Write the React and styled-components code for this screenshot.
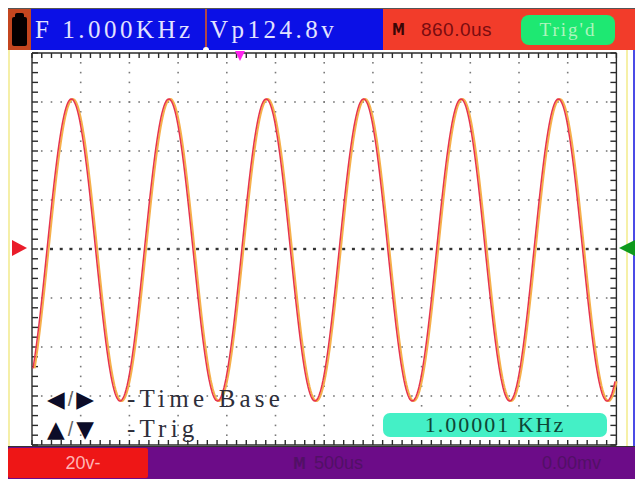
import React from 'react';
import styled, { createGlobalStyle } from 'styled-components';

const GlobalStyle = createGlobalStyle`
  body {
    margin: 0;
    background: #fff;
    font-family: "Liberation Sans", Arial, sans-serif;
  }
`;

const W = 587;
const H = 396;
const X0 = 1;
const Y0 = 3;
const DX = 48.7;
const DY = 49;
const COLS = 12;
const ROWS = 8;

const LCD_FONT = `"Liberation Serif", "DejaVu Serif", serif`;

const Frame = styled.div`
  margin: 8px 0 0 8px;
  width: 627px;
  display: flex;
  flex-direction: column;
`;

const TopBar = styled.div`
  display: flex;
  height: 41px;
  border-top: 1px solid #555;
`;

const BatteryCell = styled.div`
  width: 23px;
  background: #c4461f;
  display: flex;
  align-items: center;
  justify-content: center;
`;

const Battery = styled.div`
  position: relative;
  width: 15px;
  height: 29px;
  margin-top: 4px;
  background: #050000;
  border-radius: 2px;

  &::before {
    content: '';
    position: absolute;
    left: 3px;
    top: -4px;
    width: 9px;
    height: 4px;
    background: #050000;
    border-radius: 2px 2px 0 0;
  }
`;

const Readout = styled.div`
  width: ${p => p.$w}px;
  background: #0b10e6;
  color: #e2e2ff;
  font-family: ${LCD_FONT};
  font-size: 25px;
  letter-spacing: 3.5px;
  display: flex;
  align-items: center;
  padding-left: ${p => p.$pad}px;
  box-sizing: border-box;
  white-space: pre;
`;

const Divider = styled.div`
  position: relative;
  width: 2px;
  background: #b04848;

  &::after {
    content: '';
    position: absolute;
    left: -2px;
    bottom: -3px;
    width: 6px;
    height: 6px;
    border-radius: 50%;
    background: #fff;
  }
`;

const StatusCell = styled.div`
  flex: 1;
  background: #f23c2a;
  display: flex;
  align-items: center;
  padding: 0 20px 0 9px;
`;

const MIcon = styled.span`
  font-family: "DejaVu Sans", sans-serif;
  font-weight: bold;
  font-size: 13px;
  color: ${p => p.$color};
  margin-right: ${p => p.$gap}px;
  transform: scaleY(1.15);
`;

const TimeText = styled.span`
  color: #7a0c10;
  font-size: 19px;
  letter-spacing: 0.5px;
`;

const TrigPill = styled.div`
  margin-left: auto;
  width: 94px;
  height: 30px;
  border-radius: 8px;
  background: #1ee872;
  color: #aef5be;
  font-family: ${LCD_FONT};
  font-size: 19px;
  letter-spacing: 2px;
  display: flex;
  align-items: center;
  justify-content: center;
`;

const Middle = styled.div`
  display: flex;
  height: ${H}px;
`;

const LeftGutter = styled.div`
  width: 21px;
  border-left: 2px solid #f5efa8;
  display: flex;
  align-items: center;
`;

const Marker = styled.div`
  width: 0;
  height: 0;
  border-top: 8px solid transparent;
  border-bottom: 8px solid transparent;
  ${p => p.$dir === 'right'
    ? `border-left: 15px solid ${p.$color}; margin-left: 2px;`
    : `border-right: 16px solid ${p.$color}; margin-left: 1px;`}
`;

const Screen = styled.div`
  position: relative;
  width: ${W}px;
  height: ${H}px;
`;

const RightGutter = styled.div`
  width: 15px;
  border-right: 2px solid #4b4be6;
  display: flex;
  align-items: center;
  background: linear-gradient(to right, transparent 8px, #f6f0a8 8px, #f6f0a8 10px, transparent 10px);
`;

const TrigPointer = styled.div`
  position: absolute;
  left: 204px;
  top: 1px;
  width: 0;
  height: 0;
  border-left: 5px solid transparent;
  border-right: 5px solid transparent;
  border-top: 10px solid #ff22ee;
`;

const Hints = styled.div`
  position: absolute;
  left: 16px;
  top: 336px;
  display: flex;
  flex-direction: column;
  gap: 4px;
`;

const HintRow = styled.div`
  display: flex;
  align-items: center;
  height: 26px;
  font-family: ${LCD_FONT};
  font-size: 25px;
  letter-spacing: 4.2px;
  color: #2e2e3a;
  white-space: pre;
`;

const Keys = styled.span`
  width: 80px;
  display: flex;
  align-items: center;
  font-family: "DejaVu Sans", sans-serif;
  font-size: 23px;
  letter-spacing: 0;
  color: #0c0c28;
`;

const Slash = styled.span`
  font-family: "Liberation Sans", sans-serif;
  font-size: 20px;
  color: #666;
  margin: 0 3px;
`;

const FreqPill = styled.div`
  position: absolute;
  left: 352px;
  top: 363px;
  width: 224px;
  height: 24px;
  border-radius: 7px;
  background: #44f0c6;
  color: #0e4636;
  font-family: ${LCD_FONT};
  font-size: 22px;
  letter-spacing: 2px;
  display: flex;
  align-items: center;
  justify-content: center;
  white-space: pre;
`;

const BottomBar = styled.div`
  display: flex;
  align-items: center;
  height: 32px;
  background: #6c0c88;
  border-top: 1px solid #333;
`;

const ChannelPill = styled.div`
  width: 140px;
  height: 30px;
  background: #ee1616;
  border-radius: 2px;
  color: #ffb4b4;
  font-size: 18px;
  display: flex;
  align-items: center;
  justify-content: center;
  padding-left: 10px;
  box-sizing: border-box;
`;

const DimLabel = styled.span`
  color: #521066;
  font-size: 18px;
  display: flex;
  align-items: center;
  margin-left: ${p => p.$ml || 0};
  margin-right: ${p => p.$mr || 0}px;
`;

const range = n => Array.from({ length: n }, (_, i) => i);

const Graticule = () => {
  const gx = X0 + COLS * DX;
  const gy = Y0 + ROWS * DY;
  const sub = range(COLS * 5 + 1).map(i => X0 + (i * DX) / 5);
  const subY = range(ROWS * 5 + 1).map(i => Y0 + (i * DY) / 5);
  const ticks = [];

  // frame ticks, five per division
  sub.forEach((x, i) => {
    ticks.push(<line key={`tt${i}`} x1={x} y1={Y0} x2={x} y2={Y0 + 5} />);
    ticks.push(<line key={`tb${i}`} x1={x} y1={gy} x2={x} y2={gy - 5} />);
  });
  subY.forEach((y, i) => {
    ticks.push(<line key={`tl${i}`} x1={X0} y1={y} x2={X0 + 6} y2={y} />);
    ticks.push(<line key={`tr${i}`} x1={gx} y1={y} x2={gx - 6} y2={y} />);
  });

  const dots = [];
  range(ROWS - 1).forEach(r => {
    const y = Y0 + (r + 1) * DY;
    const center = r + 1 === ROWS / 2;
    sub.slice(1, -1).forEach((x, i) => {
      dots.push(center
        ? <rect key={`h${r}-${i}`} x={x - 1.5} y={y - 1.2} width={3} height={2.4} fill="#333" />
        : <rect key={`h${r}-${i}`} x={x - 0.8} y={y - 0.8} width={1.6} height={1.6} fill="#7a7a7a" />);
    });
  });
  range(COLS - 1).forEach(c => {
    const x = X0 + (c + 1) * DX;
    subY.slice(1, -1).forEach((y, i) => {
      dots.push(<rect key={`v${c}-${i}`} x={x - 0.8} y={y - 0.8} width={1.6} height={1.6} fill="#7a7a7a" />);
    });
  });

  return (
    <g>
      <g stroke="#2a2a2a" strokeWidth="1.4">
        <line x1={X0} y1={Y0} x2={gx} y2={Y0} />
        <line x1={X0} y1={gy} x2={gx} y2={gy} />
        <line x1={X0} y1={Y0} x2={X0} y2={gy} />
        <line x1={gx} y1={Y0} x2={gx} y2={gy} />
        {ticks}
      </g>
      {dots}
    </g>
  );
};

const wavePoints = shift => {
  const pts = [];
  for (let x = 2; x <= X0 + COLS * DX - 1; x += 1) {
    const y = 200 + 151 * Math.cos((2 * Math.PI * (x - 89)) / 97.4);
    pts.push(`${(x + shift).toFixed(1)},${y.toFixed(1)}`);
  }
  return pts.join(' ');
};

const Waveform = () => (
  <g fill="none" strokeLinejoin="round">
    <polyline points={wavePoints(1.6)} stroke="#f6b04a" strokeWidth="2" />
    <polyline points={wavePoints(0)} stroke="#e6344c" strokeWidth="1.5" />
  </g>
);

const App = () => {
  return (
    <>
      <GlobalStyle />
      <Frame>
        <TopBar>
          <BatteryCell><Battery /></BatteryCell>
          <Readout $w={174} $pad={4}>F 1.000KHz</Readout>
          <Divider />
          <Readout $w={176} $pad={3}>Vp124.8v</Readout>
          <StatusCell>
            <MIcon $color="#3a0606" $gap={16}>M</MIcon>
            <TimeText>860.0us</TimeText>
            <TrigPill>Trig'd</TrigPill>
          </StatusCell>
        </TopBar>

        <Middle>
          <LeftGutter><Marker $dir="right" $color="#ea1c2a" /></LeftGutter>
          <Screen>
            <svg width={W} height={H} viewBox={`0 0 ${W} ${H}`}>
              <Graticule />
              <Waveform />
            </svg>
            <TrigPointer />
            <Hints>
              <HintRow>
                <Keys>◀<Slash>/</Slash>▶</Keys>-Time Base
              </HintRow>
              <HintRow>
                <Keys>▲<Slash>/</Slash>▼</Keys>-Trig
              </HintRow>
            </Hints>
            <FreqPill>1.00001 KHz</FreqPill>
          </Screen>
          <RightGutter><Marker $dir="left" $color="#0e9a1c" /></RightGutter>
        </Middle>

        <BottomBar>
          <ChannelPill>20v-</ChannelPill>
          <DimLabel $ml="145px"><MIcon $color="#521066" $gap={8}>M</MIcon>500us</DimLabel>
          <DimLabel $ml="auto" $mr={34}>0.00mv</DimLabel>
        </BottomBar>
      </Frame>
    </>
  );
};

export default App;
